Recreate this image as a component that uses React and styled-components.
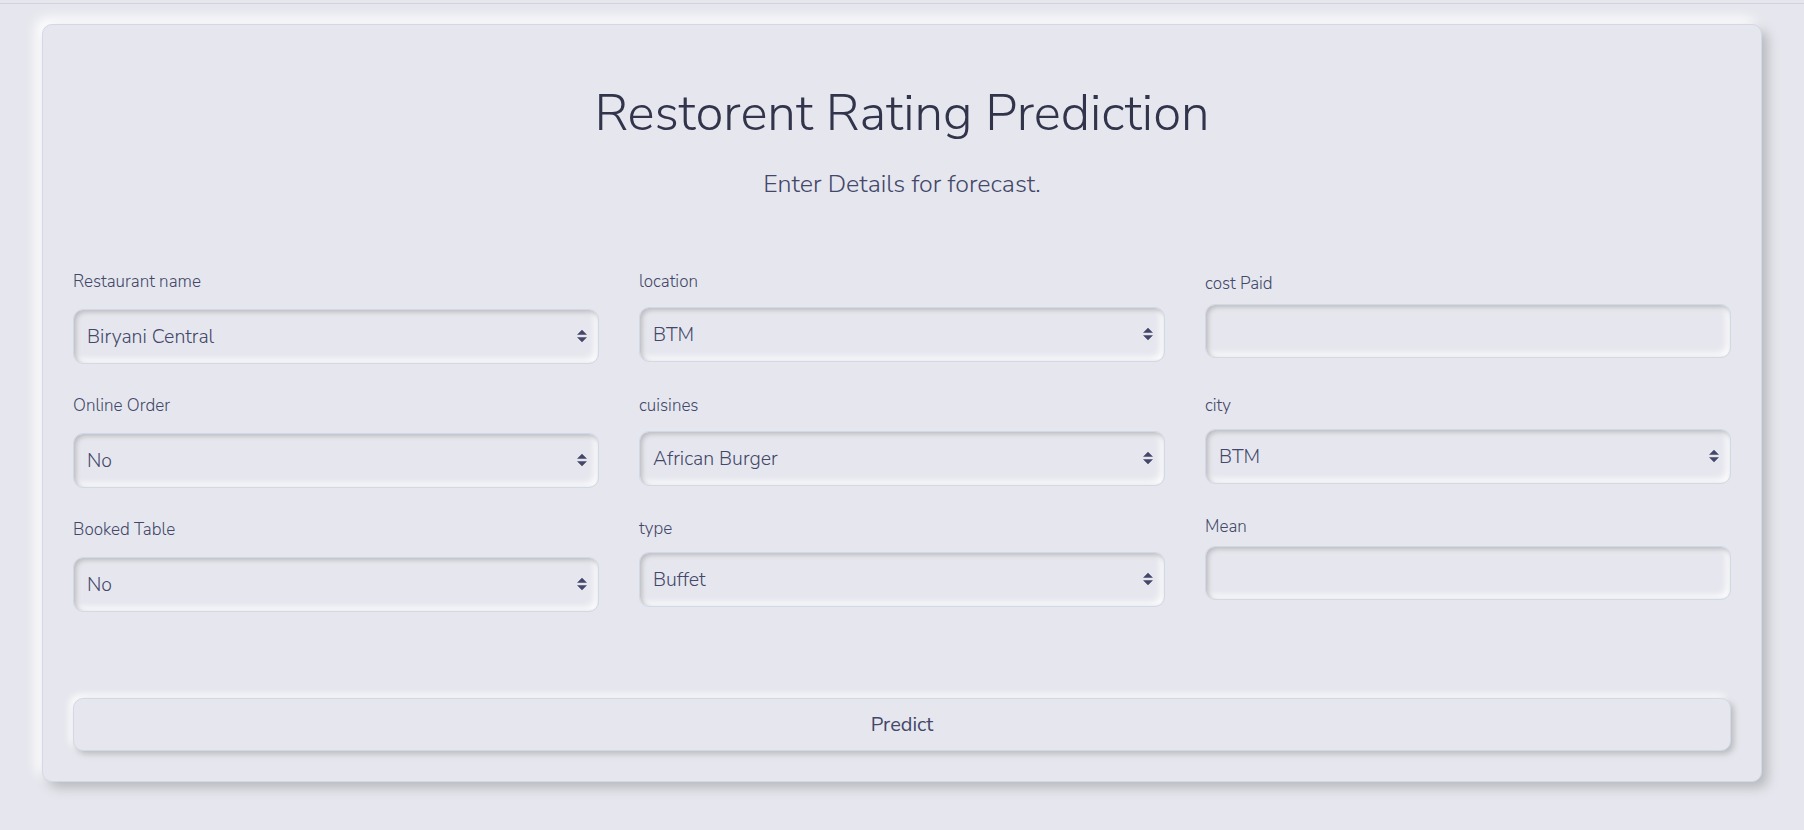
import styled, { createGlobalStyle } from "styled-components";

const GlobalStyle = createGlobalStyle`
  html, body {
    margin: 0;
    padding: 0;
    background: #e6e7ee;
  }
  body {
    font-family: "Nunito Sans", Lato, "Open Sans", sans-serif;
    color: #44476a;
  }
  * {
    box-sizing: border-box;
  }
`;

const Page = styled.div`
  min-height: 100vh;
  padding-top: 3px;
`;

const TopRule = styled.div`
  height: 1px;
  background: #d2d3d9;
`;

const Card = styled.main`
  margin: 20px 42px 0;
  padding: 23px 30px 30px;
  background: #e6e7ee;
  border: 1px solid #d1d9e6;
  border-radius: 10px;
  box-shadow: 6px 6px 12px #b8b9be, -6px -6px 12px #ffffff;
`;

const Header = styled.header`
  text-align: center;
  padding-top: 35px;
`;

const Title = styled.h1`
  margin: 0;
  font-size: 51px;
  line-height: 1.2;
  font-weight: 300;
  color: #31344b;
`;

const Lead = styled.p`
  margin: 22px 0 0;
  font-size: 25px;
  line-height: 1.5;
  font-weight: 300;
  color: #44476a;
`;

const Form = styled.form`
  margin-top: 66px;
`;

const Grid = styled.div`
  display: grid;
  grid-template-columns: repeat(3, 1fr);
  column-gap: 40px;
  align-items: start;
`;

const Column = styled.div`
  display: flex;
  flex-direction: column;
  padding-top: ${(p) => p.$offset || 0}px;
`;

const Field = styled.div`
  display: flex;
  flex-direction: column;
  gap: ${(p) => p.$labelGap}px;
  margin-bottom: ${(p) => p.$after}px;
`;

const Label = styled.label`
  font-size: 17px;
  line-height: 24px;
  font-weight: 300;
  color: #44476a;
`;

const controlStyle = `
  width: 100%;
  height: 55px;
  padding: 0 36px 0 13px;
  font-family: inherit;
  font-size: 19.5px;
  font-weight: 300;
  color: #44476a;
  background: #e6e7ee;
  border: 1px solid #d1d9e6;
  border-radius: 10px;
  box-shadow: inset 2px 2px 5px #b8b9be, inset -3px -3px 7px #ffffff;
  outline: none;
`;

const Input = styled.input`
  ${controlStyle}
  height: ${(p) => p.$height || 55}px;
`;

const SelectWrap = styled.div`
  position: relative;
`;

const Select = styled.select`
  ${controlStyle}
  appearance: none;
  -webkit-appearance: none;
`;

const Caret = styled.svg`
  position: absolute;
  right: 12px;
  top: 50%;
  width: 10px;
  height: 13px;
  transform: translateY(-50%);
  pointer-events: none;
`;

const PredictButton = styled.button`
  display: block;
  width: 100%;
  height: 53px;
  margin-top: 86px;
  font-family: inherit;
  font-size: 20px;
  font-weight: 400;
  color: #44476a;
  background: #e6e7ee;
  border: 1px solid #d1d9e6;
  border-radius: 10px;
  box-shadow: 3px 3px 6px #b8b9be, -3px -3px 7px #ffffff;
  cursor: pointer;
`;

const columns = [
  {
    offset: 0,
    fields: [
      { label: "Restaurant name", value: "Biryani Central", labelGap: 15, after: 30 },
      { label: "Online Order", value: "No", labelGap: 15, after: 30 },
      { label: "Booked Table", value: "No", labelGap: 15, after: 0 },
    ],
  },
  {
    offset: 0,
    fields: [
      { label: "location", value: "BTM", labelGap: 13, after: 32 },
      { label: "cuisines", value: "African Burger", labelGap: 13, after: 31 },
      { label: "type", value: "Buffet", labelGap: 11, after: 0 },
    ],
  },
  {
    offset: 2,
    fields: [
      { label: "cost Paid", input: true, labelGap: 8, after: 36 },
      { label: "city", value: "BTM", labelGap: 11, after: 31 },
      { label: "Mean", input: true, labelGap: 7, after: 0 },
    ],
  },
];

function SelectBox({ id, value }) {
  return (
    <SelectWrap>
      <Select id={id} defaultValue={value}>
        <option>{value}</option>
      </Select>
      <Caret viewBox="0 0 4 5">
        <path d="M2 0L0 2h4zm0 5L0 3h4z" fill="#44476a" />
      </Caret>
    </SelectWrap>
  );
}

export default function App() {
  return (
    <>
      <GlobalStyle />
      <Page>
        <TopRule />
        <Card>
          <Header>
            <Title>Restorent Rating Prediction</Title>
            <Lead>Enter Details for forecast.</Lead>
          </Header>
          <Form onSubmit={(e) => e.preventDefault()}>
            <Grid>
              {columns.map((col, ci) => (
                <Column key={ci} $offset={col.offset}>
                  {col.fields.map((f) => {
                    const id = f.label.replace(/\s+/g, "-").toLowerCase();
                    return (
                      <Field key={f.label} $labelGap={f.labelGap} $after={f.after}>
                        <Label htmlFor={id}>{f.label}</Label>
                        {f.input ? (
                          <Input id={id} type="text" $height={54} />
                        ) : (
                          <SelectBox id={id} value={f.value} />
                        )}
                      </Field>
                    );
                  })}
                </Column>
              ))}
            </Grid>
            <PredictButton type="submit">Predict</PredictButton>
          </Form>
        </Card>
      </Page>
    </>
  );
}
